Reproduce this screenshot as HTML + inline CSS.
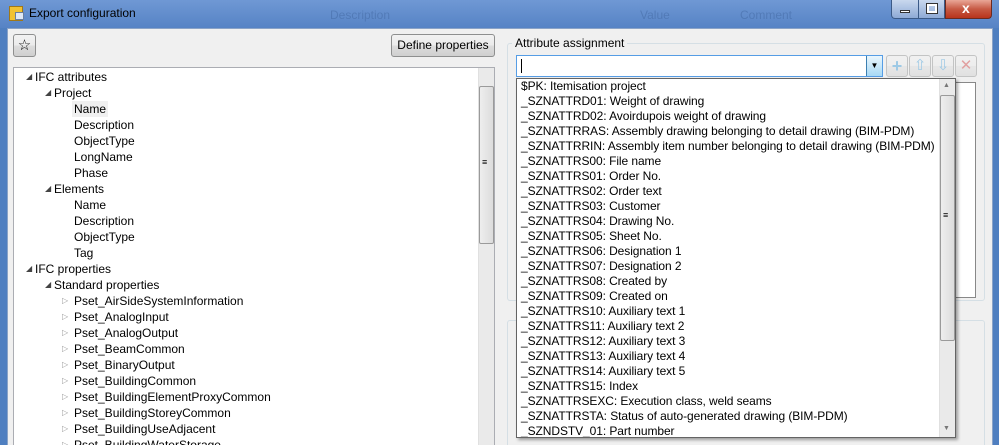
<!DOCTYPE html>
<html><head><style>
*{margin:0;padding:0;box-sizing:border-box}
html,body{width:999px;height:445px;overflow:hidden}
body{font:12px "Liberation Sans",sans-serif;color:#000;background:#4f7fc0;position:relative}
.abs{position:absolute}
#title{left:0;top:0;width:999px;height:28px;background:linear-gradient(#6f98d4,#5683c5)}
#content{left:7px;top:28px;width:986px;height:417px;background:#f0f0f0;border:1px solid #8aa3c7;border-bottom:none}
.btn{border:1px solid #8e8f8f;border-radius:3px;background:linear-gradient(#f2f2f2,#ebebeb 50%,#dddddd 51%,#cfcfcf)}
.tree div{position:absolute;white-space:nowrap;height:16px;line-height:16px}
.tri{font-size:8px;color:#444}
.list div{position:absolute;left:4px;white-space:nowrap;line-height:15px;letter-spacing:-0.08px}
.sb{background:#eaeaea;border-left:1px solid #e0e0e0}
.thumb{background:linear-gradient(90deg,#eee,#dcdcdc);border:1px solid #9a9a9a;border-radius:2px}
</style></head><body>
<div id="title" class="abs"></div>
<div class="abs" style="left:9px;top:6px;width:14px;height:15px;background:#f1c232;border:1px solid #a07818"></div>
<div class="abs" style="left:15px;top:12px;width:9px;height:8px;background:#dfe8f5;border:1px solid #6a7fa0"></div>
<div class="abs" style="left:29px;top:6px;font-size:12px">Export configuration</div>
<div class="abs" style="left:330px;top:8px;color:#3a5f98;font-size:12px;opacity:.4">Description</div>
<div class="abs" style="left:640px;top:8px;color:#3a5f98;font-size:12px;opacity:.4">Value</div>
<div class="abs" style="left:740px;top:8px;color:#3a5f98;font-size:12px;opacity:.4">Comment</div>
<div class="abs" style="left:891px;top:0;width:28px;height:19px;border:1px solid #3b5a87;border-top:none;border-radius:0 0 0 4px;background:linear-gradient(#c9d8ee,#8eaad6)"></div>
<div class="abs" style="left:900px;top:10px;width:10px;height:3px;background:#fff;border:1px solid #333"></div>
<div class="abs" style="left:919px;top:0;width:26px;height:19px;border:1px solid #3b5a87;border-top:none;border-left:none;background:linear-gradient(#c9d8ee,#8eaad6)"></div>
<div class="abs" style="left:927px;top:4px;width:10px;height:9px;border:2px solid #fff;outline:1px solid #333"></div>
<div class="abs" style="left:945px;top:0;width:47px;height:19px;border:1px solid #6b2a20;border-top:none;border-radius:0 0 4px 0;background:linear-gradient(#e9a797,#c75a44 50%,#b8341c)"></div>
<div class="abs" style="left:962px;top:0px;color:#fff;font-weight:bold;font-size:14px">x</div>
<div id="content" class="abs"></div>
<div class="abs btn" style="left:13px;top:34px;width:23px;height:23px;text-align:center;line-height:21px;font-size:15px">☆</div>
<div class="abs btn" style="left:391px;top:34px;width:104px;height:23px;text-align:center;line-height:21px">Define properties</div>
<div class="abs tree" style="left:13px;top:67px;width:482px;height:378px;background:#fff;border:1px solid #abadb3;border-bottom:none;overflow:hidden">
<div class="tri" style="left:12px;top:1px">◢</div><div style="left:21px;top:1px">IFC attributes</div>
<div class="tri" style="left:31px;top:17px">◢</div><div style="left:40px;top:17px">Project</div>
<div style="left:58px;top:33px;background:#f0f0f0;padding:0 2px">Name</div>
<div style="left:60px;top:49px">Description</div>
<div style="left:60px;top:65px">ObjectType</div>
<div style="left:60px;top:81px">LongName</div>
<div style="left:60px;top:97px">Phase</div>
<div class="tri" style="left:31px;top:113px">◢</div><div style="left:40px;top:113px">Elements</div>
<div style="left:60px;top:129px">Name</div>
<div style="left:60px;top:145px">Description</div>
<div style="left:60px;top:161px">ObjectType</div>
<div style="left:60px;top:177px">Tag</div>
<div class="tri" style="left:12px;top:193px">◢</div><div style="left:21px;top:193px">IFC properties</div>
<div class="tri" style="left:31px;top:209px">◢</div><div style="left:40px;top:209px">Standard properties</div>
<div class="tri" style="left:48px;top:225px;color:#999">▷</div><div style="left:60px;top:225px">Pset_AirSideSystemInformation</div>
<div class="tri" style="left:48px;top:241px;color:#999">▷</div><div style="left:60px;top:241px">Pset_AnalogInput</div>
<div class="tri" style="left:48px;top:257px;color:#999">▷</div><div style="left:60px;top:257px">Pset_AnalogOutput</div>
<div class="tri" style="left:48px;top:273px;color:#999">▷</div><div style="left:60px;top:273px">Pset_BeamCommon</div>
<div class="tri" style="left:48px;top:289px;color:#999">▷</div><div style="left:60px;top:289px">Pset_BinaryOutput</div>
<div class="tri" style="left:48px;top:305px;color:#999">▷</div><div style="left:60px;top:305px">Pset_BuildingCommon</div>
<div class="tri" style="left:48px;top:321px;color:#999">▷</div><div style="left:60px;top:321px">Pset_BuildingElementProxyCommon</div>
<div class="tri" style="left:48px;top:337px;color:#999">▷</div><div style="left:60px;top:337px">Pset_BuildingStoreyCommon</div>
<div class="tri" style="left:48px;top:353px;color:#999">▷</div><div style="left:60px;top:353px">Pset_BuildingUseAdjacent</div>
<div class="tri" style="left:48px;top:369px;color:#999">▷</div><div style="left:60px;top:369px">Pset_BuildingWaterStorage</div>
</div>
<div class="abs sb" style="left:478px;top:68px;width:16px;height:377px"></div>
<div class="abs thumb" style="left:479px;top:86px;width:15px;height:158px"></div>
<div class="abs" style="left:482px;top:157px;font-size:9px">≡</div>
<div class="abs" style="left:507px;top:43px;width:478px;height:258px;border:1px solid #d5dfe5;border-radius:3px"></div>
<div class="abs" style="left:512px;top:36px;background:#f0f0f0;padding:0 3px">Attribute assignment</div>
<div class="abs" style="left:507px;top:320px;width:478px;height:130px;border:1px solid #d5dfe5;border-radius:3px"></div>
<div class="abs" style="left:516px;top:55px;width:367px;height:22px;background:#fff;border:1px solid #569de5"></div>
<div class="abs" style="left:521px;top:59px;width:1px;height:14px;background:#000"></div>
<div class="abs" style="left:866px;top:56px;width:16px;height:20px;background:linear-gradient(#eaf6fd,#a7d9f5);border-left:1px solid #3c7fb1;text-align:center;font-size:8px;line-height:20px">▼</div>
<div class="abs btn" style="left:886px;top:55px;width:22px;height:22px;opacity:.45;color:#3a9ad9;text-align:center;font-weight:bold;font-size:18px;line-height:20px">+</div>
<div class="abs btn" style="left:909px;top:55px;width:22px;height:22px;opacity:.45;color:#3a9ad9;text-align:center;font-size:15px;line-height:20px">⇧</div>
<div class="abs btn" style="left:932px;top:55px;width:22px;height:22px;opacity:.45;color:#3a9ad9;text-align:center;font-size:15px;line-height:20px">⇩</div>
<div class="abs btn" style="left:955px;top:55px;width:22px;height:22px;opacity:.45;color:#d04040;text-align:center;font-size:15px;line-height:20px">✕</div>
<div class="abs" style="left:940px;top:82px;width:36px;height:216px;background:#fff;border:1px solid #888"></div>
<div class="abs list" style="left:516px;top:78px;width:440px;height:360px;background:#fff;border:1px solid #646464;box-shadow:2px 2px 3px rgba(0,0,0,.35);overflow:hidden">
<div style="top:0">$PK: Itemisation project</div>
<div style="top:15px">_SZNATTRD01: Weight of drawing</div>
<div style="top:30px">_SZNATTRD02: Avoirdupois weight of drawing</div>
<div style="top:45px">_SZNATTRRAS: Assembly drawing belonging to detail drawing (BIM-PDM)</div>
<div style="top:60px">_SZNATTRRIN: Assembly item number belonging to detail drawing (BIM-PDM)</div>
<div style="top:75px">_SZNATTRS00: File name</div>
<div style="top:90px">_SZNATTRS01: Order No.</div>
<div style="top:105px">_SZNATTRS02: Order text</div>
<div style="top:120px">_SZNATTRS03: Customer</div>
<div style="top:135px">_SZNATTRS04: Drawing No.</div>
<div style="top:150px">_SZNATTRS05: Sheet No.</div>
<div style="top:165px">_SZNATTRS06: Designation 1</div>
<div style="top:180px">_SZNATTRS07: Designation 2</div>
<div style="top:195px">_SZNATTRS08: Created by</div>
<div style="top:210px">_SZNATTRS09: Created on</div>
<div style="top:225px">_SZNATTRS10: Auxiliary text 1</div>
<div style="top:240px">_SZNATTRS11: Auxiliary text 2</div>
<div style="top:255px">_SZNATTRS12: Auxiliary text 3</div>
<div style="top:270px">_SZNATTRS13: Auxiliary text 4</div>
<div style="top:285px">_SZNATTRS14: Auxiliary text 5</div>
<div style="top:300px">_SZNATTRS15: Index</div>
<div style="top:315px">_SZNATTRSEXC: Execution class, weld seams</div>
<div style="top:330px">_SZNATTRSTA: Status of auto-generated drawing (BIM-PDM)</div>
<div style="top:345px">_SZNDSTV_01: Part number</div>
</div>
<div class="abs sb" style="left:939px;top:79px;width:16px;height:358px"></div>
<div class="abs thumb" style="left:940px;top:95px;width:15px;height:246px"></div>
<div class="abs" style="left:943px;top:210px;font-size:9px">≡</div>
<div class="abs" style="left:943px;top:82px;font-size:7px;color:#777">▲</div>
<div class="abs" style="left:943px;top:425px;font-size:7px;color:#777">▼</div>
</body></html>
